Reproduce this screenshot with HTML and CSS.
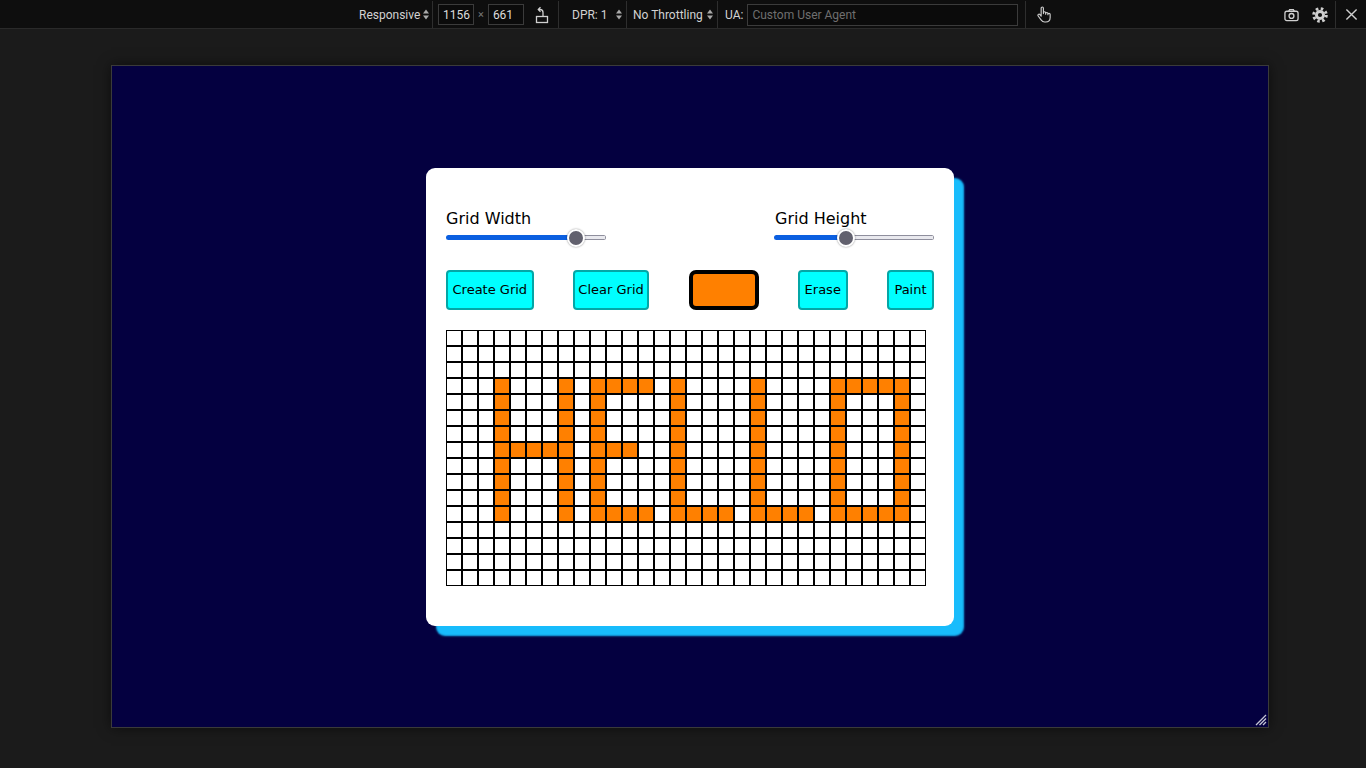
FILE: index.html
```html
<!DOCTYPE html>
<html lang="en">
<head>
<meta charset="utf-8">
<title>Pixel Art Maker</title>
<link rel="stylesheet" href="styles.css">
</head>
<body>
<header class="toolbar">
  <div class="seg seg-device">
    <span class="tb-text">Responsive</span>
    <svg class="updown" viewBox="0 0 6 11" width="6" height="11"><polygon points="0,4.5 3,0.5 6,4.5"/><polygon points="0,6.5 3,10.5 6,6.5"/></svg>
  </div>
  <div class="seg seg-size">
    <span class="tb-input num">1156</span>
    <span class="times">×</span>
    <span class="tb-input num">661</span>
    <svg class="rotate" viewBox="0 0 14 18" width="14" height="18"><rect x="1.5" y="10.5" width="11" height="6"/><path d="M8 10.5 V6.5 a3 3 0 0 0 -3 -3 H3.5"/><path d="M5.5 1.2 L3.3 3.5 L5.5 5.8"/></svg>
  </div>
  <div class="seg seg-dpr">
    <span class="tb-text">DPR: 1</span>
    <svg class="updown" viewBox="0 0 6 11" width="6" height="11"><polygon points="0,4.5 3,0.5 6,4.5"/><polygon points="0,6.5 3,10.5 6,6.5"/></svg>
  </div>
  <div class="seg seg-throttle">
    <span class="tb-text">No Throttling</span>
    <svg class="updown" viewBox="0 0 6 11" width="6" height="11"><polygon points="0,4.5 3,0.5 6,4.5"/><polygon points="0,6.5 3,10.5 6,6.5"/></svg>
  </div>
  <div class="seg seg-ua">
    <span class="tb-text">UA:</span>
    <span class="tb-input ua">Custom User Agent</span>
  </div>
  <div class="seg-touch">
    <svg class="hand" viewBox="0 0 16 18" width="15" height="17"><path d="M5.5 10.5 V2.2 a1.2 1.2 0 0 1 2.4 0 V8 M7.9 7.2 a1.2 1.2 0 0 1 2.4 0 V8.6 M10.3 8 a1.2 1.2 0 0 1 2.4 0 V9.2 M12.7 9 a1.2 1.2 0 0 1 2.4 0 V12.2 c0 2.8 -2 4.8 -4.8 4.8 H9.2 c-1.8 0 -2.8 -0.9 -3.8 -2.3 L2.3 10.6 a1.2 1.2 0 0 1 1.9 -1.5 L5.5 10.8"/></svg>
  </div>
  <div class="tb-spacer"></div>
  <div class="tb-icons">
    <svg class="camera" viewBox="0 0 16 14" width="15" height="14"><rect x="1" y="3" width="14" height="10" rx="2"/><path d="M5 3 L6 1.2 H10 L11 3"/><circle cx="8" cy="8" r="2.6"/></svg>
    <svg class="gear" viewBox="0 0 16 16" width="16" height="16"><circle class="gear-body" cx="8" cy="8" r="5"/><circle class="gear-teeth" cx="8" cy="8" r="6.3"/><circle class="gear-hole" cx="8" cy="8" r="2.1"/></svg>
  </div>
  <div class="seg-close">
    <svg class="close" viewBox="0 0 14 14" width="13" height="13"><path d="M1.5 1.5 L12.5 12.5 M12.5 1.5 L1.5 12.5"/></svg>
  </div>
</header>

<main class="stage">
  <div class="viewport">
    <section class="card">
      <div class="controls">
        <div class="field">
          <label class="field-label" for="width">Grid Width</label>
          <input class="slider" id="width" type="range" min="1" max="35" value="30" style="--fill: 81.3%">
        </div>
        <div class="field field-right">
          <label class="field-label" for="height">Grid Height</label>
          <input class="slider" id="height" type="range" min="1" max="35" value="16" style="--fill: 44.8%">
        </div>
      </div>
      <div class="actions">
        <button class="btn" type="button">Create Grid</button>
        <button class="btn btn-tight" type="button">Clear Grid</button>
        <button class="swatch" type="button" aria-label="Colour"></button>
        <button class="btn btn-wide" type="button">Erase</button>
        <button class="btn" type="button">Paint</button>
      </div>
      <div class="grid" id="grid"></div>
    </section>
    <svg class="resize-handle" viewBox="0 0 14 14" width="14" height="14"><path d="M13 3 L3 13 M13 6.5 L6.5 13 M13 10 L10 13"/></svg>
  </div>
</main>
<script src="script.js"></script>
</body>
</html>
```

FILE: styles.css
```css
* { box-sizing: border-box; }

html, body {
  margin: 0;
  height: 100%;
}

body {
  background: #1b1b1b;
  overflow: hidden;
  font-family: "DejaVu Sans", Verdana, sans-serif;
}

/* ---------- devtools toolbar ---------- */
.toolbar {
  height: 29px;
  display: flex;
  align-items: stretch;
  background: #0e0e0e;
  border-bottom: 1px solid #2a2a2a;
  padding: 1px 0 0 351px;
  font-family: Roboto, "Liberation Sans", sans-serif;
  font-size: 12px;
  color: #d2d2d2;
}

.seg {
  display: flex;
  align-items: center;
  border-right: 1px solid #2e2e2e;
}

.seg-device { width: 82px; padding-left: 8px; gap: 3px; }
.seg-size { width: 126px; padding-left: 5px; }
.seg-dpr { width: 68px; padding-left: 13px; gap: 9px; }
.seg-throttle { width: 91px; padding-left: 6px; gap: 4px; }
.seg-ua { width: 308px; padding-left: 7px; gap: 4px; }

.tb-text { white-space: nowrap; }

.updown { fill: #a9a9a9; }

.tb-input {
  display: flex;
  align-items: center;
  flex-shrink: 0;
  height: 21px;
  border: 1px solid #3b3b3b;
  background: #0b0b0b;
  color: #dcdcdc;
  padding: 0 4px;
}

.tb-input.num { width: 36px; }
.tb-input.ua { width: 271px; height: 22px; color: #6f6f6f; }

.times { color: #777; font-size: 11px; margin: 0 4px; }

.rotate {
  margin-left: 11px;
  fill: none;
  stroke: #cfcfcf;
  stroke-width: 1.3;
}

.seg-touch {
  display: flex;
  align-items: center;
  padding-left: 10px;
}

.hand {
  fill: none;
  stroke: #cfcfcf;
  stroke-width: 1.2;
  stroke-linejoin: round;
  stroke-linecap: round;
}

.tb-spacer { flex: 1; }

.tb-icons {
  display: flex;
  align-items: center;
  gap: 13px;
  padding-right: 7px;
  border-right: 1px solid #2e2e2e;
}

.camera {
  fill: none;
  stroke: #cfcfcf;
  stroke-width: 1.4;
}

.gear-body { fill: #cfcfcf; }
.gear-teeth {
  fill: none;
  stroke: #cfcfcf;
  stroke-width: 3;
  stroke-dasharray: 2.5 2.45;
}
.gear-hole { fill: #0e0e0e; }

.seg-close {
  width: 30px;
  display: flex;
  align-items: center;
  justify-content: center;
}

.close {
  stroke: #cfcfcf;
  stroke-width: 1.5;
}

/* ---------- emulated viewport ---------- */
.stage {
  padding: 36px 0 0 111px;
}

.viewport {
  position: relative;
  width: 1158px;
  height: 663px;
  border: 1px solid #3a3a3a;
  background: #040040;
  box-shadow: 0 0 12px rgba(0, 0, 0, 0.55);
  display: flex;
  align-items: center;
  justify-content: center;
}

.resize-handle {
  position: absolute;
  right: 1px;
  bottom: 1px;
  stroke: #c4c4d4;
  stroke-width: 1.3;
}

/* ---------- app card ---------- */
.card {
  width: 528px;
  padding: 41px 20px 40px;
  background: #ffffff;
  border-radius: 9px;
  box-shadow: 10px 10px 2px #18bcfc;
}

.controls {
  display: flex;
  justify-content: space-between;
}

.field {
  display: flex;
  flex-direction: column;
  width: 160px;
}

.field-right .field-label { padding-left: 1px; }

.field-label {
  font-size: 16px;
  line-height: 19px;
  color: #000;
}

.slider {
  -webkit-appearance: none;
  appearance: none;
  width: 160px;
  height: 18px;
  margin: 1px 0 0;
  padding: 0;
  background: transparent;
}

.slider::-webkit-slider-runnable-track {
  height: 5px;
  border-radius: 3px;
  background:
    linear-gradient(#0b5fe0, #0b5fe0) 0 0 / var(--fill) 100% no-repeat,
    linear-gradient(#e9e9ee, #e9e9ee) 1px 1px / calc(100% - 2px) calc(100% - 2px) no-repeat,
    #8f8f9d;
}

.slider::-webkit-slider-thumb {
  -webkit-appearance: none;
  appearance: none;
  width: 18px;
  height: 18px;
  margin-top: -6.5px;
  border-radius: 50%;
  background: #62616e;
  border: 2px solid #ffffff;
  box-shadow: 0 0 2px rgba(0, 0, 0, 0.45);
}

.actions {
  display: flex;
  justify-content: space-between;
  margin-top: 23px;
  height: 40px;
}

.btn {
  height: 40px;
  min-width: 47px;
  padding: 0 4.5px;
  margin: 0;
  background: #00ffff;
  border: 2px solid #04a6a6;
  border-radius: 4px;
  font-family: "DejaVu Sans", Verdana, sans-serif;
  font-size: 13px;
  color: #000;
}

.btn-tight { padding: 0 3.5px; }
.btn-wide { min-width: 50px; }

.swatch {
  width: 70px;
  height: 40px;
  margin: 0;
  padding: 0;
  background: #ff8000;
  border: 4px solid #000;
  border-radius: 7px;
}

.grid {
  margin-top: 20px;
  display: grid;
  grid-template-columns: repeat(30, 16px);
  grid-auto-rows: 16px;
  width: 480px;
}

.cell {
  border: 1px solid #000;
  background: #fff;
}

.cell.on {
  background: #ff8000;
}
```

FILE: script.js
```js
const pattern = [
  "..............................",
  "..............................",
  "..............................",
  "...#...#.####.#....#....#####.",
  "...#...#.#....#....#....#...#.",
  "...#...#.#....#....#....#...#.",
  "...#...#.#....#....#....#...#.",
  "...#####.###..#....#....#...#.",
  "...#...#.#....#....#....#...#.",
  "...#...#.#....#....#....#...#.",
  "...#...#.#....#....#....#...#.",
  "...#...#.####.####.####.#####.",
  "..............................",
  "..............................",
  "..............................",
  ".............................."
];

const grid = document.getElementById("grid");
pattern.forEach(function (row) {
  for (const ch of row) {
    const cell = document.createElement("div");
    cell.className = ch === "#" ? "cell on" : "cell";
    grid.appendChild(cell);
  }
});
```
